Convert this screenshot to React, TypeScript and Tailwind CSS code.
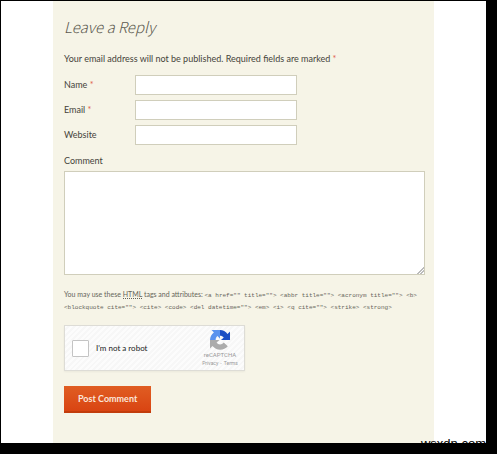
import { ReactNode } from 'react'

const allowedTags = [
  '<a href="" title="">',
  '<abbr title="">',
  '<acronym title="">',
  '<b>',
  '<blockquote cite="">',
  '<cite>',
  '<code>',
  '<del datetime="">',
  '<em>',
  '<i>',
  '<q cite="">',
  '<strike>',
  '<strong>',
]

export default function App() {
  return (
    <div className="flex min-h-screen flex-col overflow-hidden bg-black pt-px pr-[11px] pb-[11px] pl-px font-[Lato,sans-serif] text-[9px] leading-3 text-[#45433a]">
      <div className="relative flex flex-1 flex-col overflow-hidden bg-white px-13">
        <main className="flex-1 bg-[#f6f4e7] pt-4 pr-[9px] pb-6 pl-[11px]">
          <h1 className="font-['Noto_Sans_CJK_SC',sans-serif] text-[15px] leading-5 font-light text-[#5c5a50] italic">
            Leave a Reply
          </h1>
          <CommentForm />
        </main>
        <Watermark />
      </div>
    </div>
  )
}

function CommentForm() {
  return (
    <form className="mt-4" onSubmit={(e) => e.preventDefault()}>
      <p>
        Your email address will not be published. Required fields are marked{' '}
        <Required />
      </p>
      <div className="mt-[10px] flex flex-col gap-[5px]">
        <Field id="author" type="text">
          Name <Required />
        </Field>
        <Field id="email" type="email">
          Email <Required />
        </Field>
        <Field id="url" type="url">
          Website
        </Field>
      </div>
      <label htmlFor="comment" className="mt-[10px] block">
        Comment
      </label>
      <textarea
        id="comment"
        className="mt-1 block h-26 w-full resize-y border border-[#d0cebb] bg-white p-1 outline-none [&::-webkit-resizer]:bg-[linear-gradient(135deg,#fff_76%,#bbb_76%_80%,#fff_80%_86%,#bbb_86%_90%,#fff_90%)]"
      />
      <p className="mt-[14px] text-[7px] leading-[11px] text-[#66645a]">
        You may use these{' '}
        <abbr
          title="HyperText Markup Language"
          className="border-b border-dotted border-[#66645a] no-underline"
        >
          HTML
        </abbr>{' '}
        tags and attributes:{' '}
        <span className="font-['Liberation_Mono',monospace] text-[6px]">
          {allowedTags.map((tag) => (
            <span key={tag}>
              <code className="font-['Liberation_Mono',monospace] text-[6px]">
                {tag}
              </code>{' '}
            </span>
          ))}
        </span>
      </p>
      <Captcha />
      <button
        type="submit"
        className="mt-[15px] block h-[27px] border-b-2 border-[#c23c0c] bg-linear-to-b from-[#e05d22] to-[#d94412] px-[14px] font-bold text-[#fbe6da]"
      >
        Post Comment
      </button>
    </form>
  )
}

function Field(props: {
  id: string
  type: 'text' | 'email' | 'url'
  children: ReactNode
}) {
  return (
    <div className="flex items-center">
      <label htmlFor={props.id} className="w-[71px] shrink-0">
        {props.children}
      </label>
      <input
        id={props.id}
        type={props.type}
        className="h-5 w-[162px] border border-[#d0cebb] bg-white px-1 outline-none"
      />
    </div>
  )
}

function Required() {
  return <span className="text-[#e0614a]">*</span>
}

function Captcha() {
  return (
    <div className="mt-3 flex h-[46px] w-[181px] items-center border border-[#dddcd6] bg-[repeating-linear-gradient(135deg,#fcfcfc_0_2px,#f7f7f7_2px_4px)] pr-1 pl-[7px] shadow-xs">
      <input
        id="robot"
        type="checkbox"
        className="size-[17px] appearance-none rounded-[1px] border border-[#c4c4c4] bg-white"
      />
      <label htmlFor="robot" className="ml-[7px] text-[8px] text-[#222]">
        I'm not a robot
      </label>
      <div className="ml-auto flex w-10 flex-col items-center text-[#999]">
        <CaptchaLogo />
        <span className="mt-px font-[Roboto,sans-serif] text-[6px] leading-2">
          reCAPTCHA
        </span>
        <span className="flex gap-[2px] font-[Roboto,sans-serif] text-[5px] leading-2">
          <a href="#privacy">Privacy</a>
          <span>-</span>
          <a href="#terms">Terms</a>
        </span>
      </div>
    </div>
  )
}

function CaptchaLogo() {
  return (
    <svg viewBox="0 0 64 64" className="size-5" aria-hidden="true">
      <path
        d="M64 32V5l-8 7.500A32 32 0 0 0 32 0v18c5 0 9 2 12 6l-9 8z"
        fill="#1c4fc4"
      />
      <path
        d="M32 0H5l7.500 8A32 32 0 0 0 0 32h18c0-6 2-10 6-13l8 9z"
        fill="#5b93ee"
      />
      <path
        d="M0 32v27l8-7.500A32 32 0 0 0 57 52L44 40c-6 8-18 8-23 0l9-8z"
        fill="#ababab"
      />
    </svg>
  )
}

// Site mark, clipped by the lower edge of the white sheet
function Watermark() {
  return (
    <span className="absolute right-0 -bottom-[9px] font-['Liberation_Sans',sans-serif] text-[13px] leading-4 text-black">
      wsxdn.com
    </span>
  )
}
